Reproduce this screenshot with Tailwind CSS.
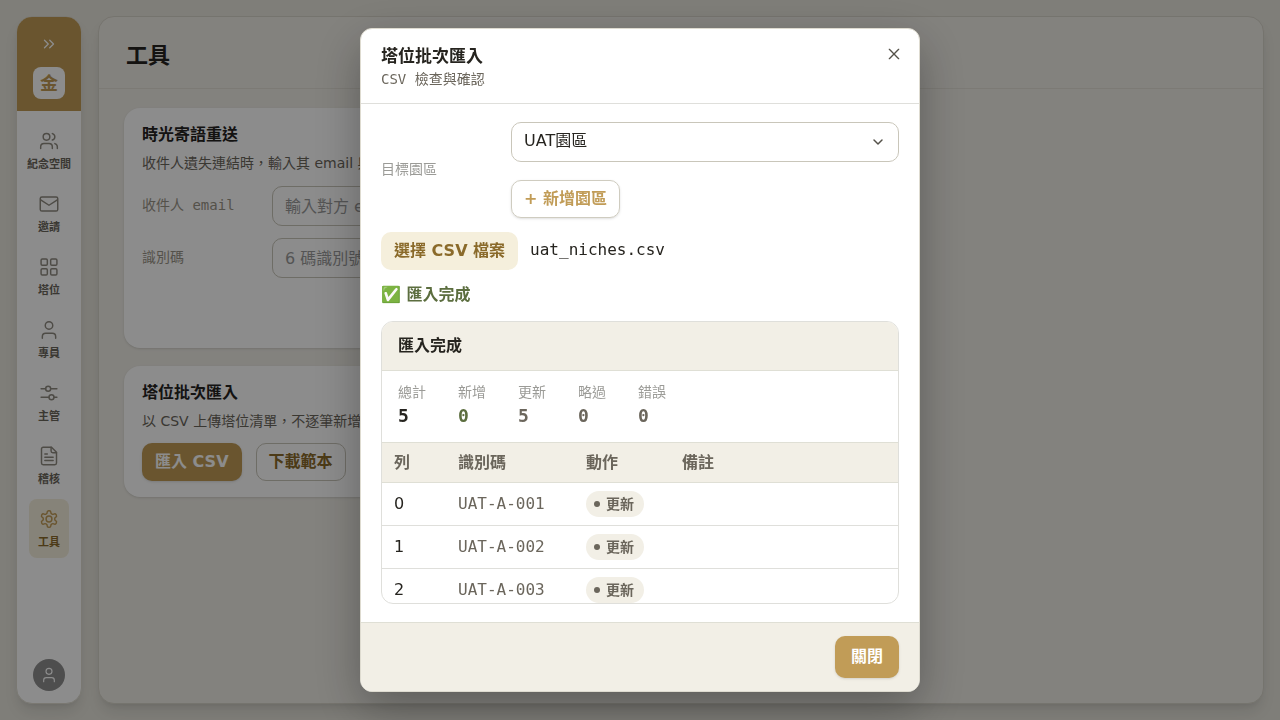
<!DOCTYPE html>
<html lang="zh-Hant">
  <head>
    <meta charset="UTF-8" />
    <meta name="viewport" content="width=device-width, initial-scale=1.0" />
    <title>工具</title>
    <script src="https://cdn.jsdelivr.net/npm/@tailwindcss/browser@4"></script>
    <style>
      body {
        font-family: "DejaVu Sans", "Noto Sans CJK TC", sans-serif;
      }
      .mono {
        font-family: "DejaVu Sans Mono", "Noto Sans CJK TC", monospace;
      }
    </style>
  </head>
  <body class="h-screen overflow-hidden bg-[#e7e5dc] text-base text-[#26241f]">
    <!-- App shell -->
    <div class="flex h-full gap-4 p-4">
      <!-- Sidebar -->
      <aside class="flex w-[66px] shrink-0 flex-col overflow-hidden rounded-2xl border border-[#dedbd0] bg-white shadow-lg">
        <div class="flex flex-col items-center gap-3 bg-[#c19c57] pt-4 pb-3 text-white">
          <button class="flex h-[22px] items-center" aria-label="展開選單">
            <svg width="18" height="18" viewBox="0 0 24 24" fill="none" stroke="currentColor" stroke-width="1.75" stroke-linecap="round" stroke-linejoin="round"><path d="m6 17 5-5-5-5" /><path d="m13 17 5-5-5-5" /></svg>
          </button>
          <div class="flex size-8 items-center justify-center rounded-lg bg-white pt-[2px] text-lg font-bold text-[#c19c57]">金</div>
        </div>
        <nav class="flex flex-1 flex-col items-center gap-1 pt-[10px] text-[11px] font-bold text-[#6b665c]">
          <a href="#" class="flex w-10 flex-col items-center gap-[6px] rounded-lg pt-[10px] pb-[7px]">
            <svg class="text-[#8f8a80]" width="20" height="20" viewBox="0 0 24 24" fill="none" stroke="currentColor" stroke-width="1.75" stroke-linecap="round" stroke-linejoin="round"><path d="M16 21v-2a4 4 0 0 0-4-4H6a4 4 0 0 0-4 4v2" /><circle cx="9" cy="7" r="4" /><path d="M22 21v-2a4 4 0 0 0-3-3.87" /><path d="M16 3.13a4 4 0 0 1 0 7.75" /></svg>
            <span class="leading-4 whitespace-nowrap">紀念空間</span>
          </a>
          <a href="#" class="flex w-10 flex-col items-center gap-[6px] rounded-lg pt-[10px] pb-[7px]">
            <svg class="text-[#8f8a80]" width="20" height="20" viewBox="0 0 24 24" fill="none" stroke="currentColor" stroke-width="1.75" stroke-linecap="round" stroke-linejoin="round"><rect x="1.5" y="3.5" width="21" height="17" rx="2" /><path d="m2 7 10 6.5L22 7" /></svg>
            <span class="leading-4 whitespace-nowrap">邀請</span>
          </a>
          <a href="#" class="flex w-10 flex-col items-center gap-[6px] rounded-lg pt-[10px] pb-[7px]">
            <svg class="text-[#8f8a80]" width="20" height="20" viewBox="0 0 24 24" fill="none" stroke="currentColor" stroke-width="1.75" stroke-linecap="round" stroke-linejoin="round"><rect x="2.5" y="2.5" width="7.5" height="7.5" rx="1.5" /><rect x="14" y="2.5" width="7.5" height="7.5" rx="1.5" /><rect x="2.5" y="14" width="7.5" height="7.5" rx="1.5" /><rect x="14" y="14" width="7.5" height="7.5" rx="1.5" /></svg>
            <span class="leading-4 whitespace-nowrap">塔位</span>
          </a>
          <a href="#" class="flex w-10 flex-col items-center gap-[6px] rounded-lg pt-[10px] pb-[7px]">
            <svg class="text-[#8f8a80]" width="20" height="20" viewBox="0 0 24 24" fill="none" stroke="currentColor" stroke-width="1.75" stroke-linecap="round" stroke-linejoin="round"><path d="M20 22v-2a4 4 0 0 0-4-4H8a4 4 0 0 0-4 4v2" /><circle cx="12" cy="6.5" r="4.5" /></svg>
            <span class="leading-4 whitespace-nowrap">專員</span>
          </a>
          <a href="#" class="flex w-10 flex-col items-center gap-[6px] rounded-lg pt-[10px] pb-[7px]">
            <svg class="text-[#8f8a80]" width="20" height="20" viewBox="0 0 24 24" fill="none" stroke="currentColor" stroke-width="1.75" stroke-linecap="round" stroke-linejoin="round"><path d="M2.5 7H8" /><circle cx="11" cy="7" r="3" /><path d="M14 7h7.5" /><path d="M2.5 17H12" /><circle cx="15" cy="17" r="3" /><path d="M18 17h3.5" /></svg>
            <span class="leading-4 whitespace-nowrap">主管</span>
          </a>
          <a href="#" class="flex w-10 flex-col items-center gap-[6px] rounded-lg pt-[10px] pb-[7px]">
            <svg class="text-[#8f8a80]" width="20" height="20" viewBox="0 0 24 24" fill="none" stroke="currentColor" stroke-width="1.75" stroke-linecap="round" stroke-linejoin="round"><path d="M15 1.5H5a2 2 0 0 0-2 2v17a2 2 0 0 0 2 2h14a2 2 0 0 0 2-2V7.5Z" /><path d="M14.5 1.5V6a2 2 0 0 0 2 2H21" /><path d="M10 9.5H7" /><path d="M17 13.5H7" /><path d="M17 17.5H7" /></svg>
            <span class="leading-4 whitespace-nowrap">稽核</span>
          </a>
          <a href="#" aria-current="page" class="flex w-10 flex-col items-center gap-[6px] rounded-lg bg-[#f5efdc] pt-[10px] pb-[7px] text-[#8a6a2a]">
            <svg class="text-[#c19c57]" width="20" height="20" viewBox="0 0 24 24" fill="none" stroke="currentColor" stroke-width="1.75" stroke-linecap="round" stroke-linejoin="round"><path d="M12.22 2h-.44a2 2 0 0 0-2 2v.18a2 2 0 0 1-1 1.73l-.43.25a2 2 0 0 1-2 0l-.15-.08a2 2 0 0 0-2.73.73l-.22.38a2 2 0 0 0 .73 2.73l.15.1a2 2 0 0 1 1 1.72v.51a2 2 0 0 1-1 1.74l-.15.09a2 2 0 0 0-.73 2.73l.22.38a2 2 0 0 0 2.73.73l.15-.08a2 2 0 0 1 2 0l.43.25a2 2 0 0 1 1 1.73V20a2 2 0 0 0 2 2h.44a2 2 0 0 0 2-2v-.18a2 2 0 0 1 1-1.73l.43-.25a2 2 0 0 1 2 0l.15.08a2 2 0 0 0 2.73-.73l.22-.39a2 2 0 0 0-.73-2.73l-.15-.08a2 2 0 0 1-1-1.74v-.5a2 2 0 0 1 1-1.74l.15-.09a2 2 0 0 0 .73-2.73l-.22-.38a2 2 0 0 0-2.73-.73l-.15.08a2 2 0 0 1-2 0l-.43-.25a2 2 0 0 1-1-1.73V4a2 2 0 0 0-2-2z" /><circle cx="12" cy="12" r="3.5" /></svg>
            <span class="leading-4 whitespace-nowrap">工具</span>
          </a>
        </nav>
        <button class="mx-auto mb-3 flex size-8 items-center justify-center rounded-full bg-[#8f8f8f] text-white" aria-label="帳號">
          <svg width="16" height="16" viewBox="0 0 24 24" fill="none" stroke="currentColor" stroke-width="1.75" stroke-linecap="round" stroke-linejoin="round"><path d="M20 22v-2a4 4 0 0 0-4-4H8a4 4 0 0 0-4 4v2" /><circle cx="12" cy="6.5" r="4.5" /></svg>
        </button>
      </aside>

      <!-- Main panel -->
      <main class="min-w-0 flex-1 rounded-2xl border border-[#d6d3c8] bg-[#efede6] shadow-lg">
        <header class="flex h-[72px] items-center border-b border-[#e2dfd6] px-[27px] pt-[6px]">
          <h1 class="text-[22px] leading-8 font-bold">工具</h1>
        </header>
        <div class="flex max-w-[720px] flex-col gap-[18px] px-[25px] pt-[19px]">
          <section class="rounded-2xl bg-white px-[18px] pt-[17px] pb-[18px] shadow-sm">
            <h2 class="leading-5 font-bold">時光寄語重送</h2>
            <p class="mt-2 text-sm leading-[21px] text-[#6b665c]">收件人遺失連結時，輸入其 email 與</p>
            <form class="mt-3 flex flex-col gap-3">
              <div class="flex items-center">
                <label for="email" class="mono w-[130px] pb-[2px] text-sm text-[#9a9488]">收件人 email</label>
                <input id="email" type="email" placeholder="輸入對方 email" class="h-10 flex-1 rounded-[10px] border border-[#c9c6ba] px-3 placeholder:text-[#9a9a9a]" />
              </div>
              <div class="flex items-center">
                <label for="code" class="mono w-[130px] pb-[2px] text-sm text-[#9a9488]">識別碼</label>
                <input id="code" type="text" placeholder="6 碼識別號" class="h-10 flex-1 rounded-[10px] border border-[#c9c6ba] px-3 placeholder:text-[#9a9a9a]" />
              </div>
              <button type="button" class="h-10 self-end rounded-[10px] bg-[#c19c57] px-3 font-bold text-white">重送</button>
            </form>
          </section>
          <section class="rounded-2xl bg-white px-[18px] pt-[17px] pb-4 shadow-sm">
            <h2 class="leading-5 font-bold">塔位批次匯入</h2>
            <p class="mt-2 text-sm leading-[21px] text-[#6b665c]">以 CSV 上傳塔位清單，不逐筆新增。</p>
            <div class="mt-[11px] flex gap-[14px]">
              <button class="h-[38px] rounded-[10px] bg-[#c19c57] px-[13px] font-bold text-white shadow">匯入 CSV</button>
              <button class="h-[38px] rounded-[10px] border border-[#c9c6ba] px-3 font-bold text-[#8a6a2a]">下載範本</button>
            </div>
          </section>
        </div>
      </main>
    </div>

    <!-- Import dialog -->
    <div class="fixed inset-0 flex items-center justify-center bg-black/45 py-7">
      <div role="dialog" aria-modal="true" aria-labelledby="dialogTitle" class="flex h-full w-[560px] flex-col overflow-hidden rounded-xl border border-[#dedbd0] bg-white shadow-[0_16px_48px_rgba(0,0,0,0.3)]">
        <header class="flex items-start justify-between border-b border-[#dfdfdb] px-5 pt-[17px] pb-[14px]">
          <div>
            <h2 id="dialogTitle" class="text-[17px] leading-5 font-bold">塔位批次匯入</h2>
            <p class="mono mt-[3px] text-sm leading-5 text-[#6b665c]">CSV 檢查與確認</p>
          </div>
          <button class="-mr-[3px] text-[#55524a]" aria-label="關閉視窗">
            <svg width="16" height="16" viewBox="0 0 24 24" fill="none" stroke="currentColor" stroke-width="2" stroke-linecap="round"><path d="M5 5l14 14M19 5 5 19" /></svg>
          </button>
        </header>

        <div class="flex min-h-0 flex-1 flex-col px-5 py-[18px]">
          <div class="flex items-center">
            <label for="park" class="mono w-[130px] pb-[2px] text-sm text-[#9b9b97]">目標園區</label>
            <div class="flex flex-1 flex-col items-start gap-[18px]">
              <div class="relative w-full">
                <select id="park" class="h-10 w-full appearance-none rounded-[10px] border border-[#c9c6ba] bg-white px-3 pb-[2px]">
                  <option>UAT園區</option>
                </select>
                <svg class="pointer-events-none absolute top-3 right-[13px] text-[#55524a]" width="16" height="16" viewBox="0 0 16 16" fill="none" stroke="currentColor" stroke-width="1.5" stroke-linecap="round" stroke-linejoin="round"><path d="m4 6 4 4 4-4" /></svg>
              </div>
              <button class="h-[38px] rounded-[10px] border border-[#cfccc0] px-3 font-bold text-[#c19c57] shadow-sm">+ 新增園區</button>
            </div>
          </div>

          <div class="mt-[14px] flex items-center gap-3">
            <button class="h-[38px] rounded-[10px] bg-[#f5efdc] px-[13px] font-bold text-[#8a6a2a]">選擇 CSV 檔案</button>
            <span class="mono pb-[2px]">uat_niches.csv</span>
          </div>

          <p class="mt-[13px] leading-6 font-bold text-[#5c6e3f]">✅ 匯入完成</p>

          <!-- Result -->
          <section class="mt-[14px] flex min-h-0 flex-1 flex-col overflow-hidden rounded-xl border border-[#dfdfdb]">
            <h3 class="shrink-0 border-b border-[#dfdfd5] bg-[#f2efe6] px-4 py-3 leading-6 font-bold">匯入完成</h3>
            <dl class="flex shrink-0 gap-8 px-4 pt-[11px] pb-[14px]">
              <div>
                <dt class="mono text-sm leading-5 text-[#9b9b97]">總計</dt>
                <dd class="mono mt-[2px] text-lg leading-6 font-bold">5</dd>
              </div>
              <div>
                <dt class="mono text-sm leading-5 text-[#9b9b97]">新增</dt>
                <dd class="mono mt-[2px] text-lg leading-6 font-bold text-[#5c6e3f]">0</dd>
              </div>
              <div>
                <dt class="mono text-sm leading-5 text-[#9b9b97]">更新</dt>
                <dd class="mono mt-[2px] text-lg leading-6 font-bold text-[#6b665c]">5</dd>
              </div>
              <div>
                <dt class="mono text-sm leading-5 text-[#9b9b97]">略過</dt>
                <dd class="mono mt-[2px] text-lg leading-6 font-bold text-[#6b665c]">0</dd>
              </div>
              <div>
                <dt class="mono text-sm leading-5 text-[#9b9b97]">錯誤</dt>
                <dd class="mono mt-[2px] text-lg leading-6 font-bold text-[#6b665c]">0</dd>
              </div>
            </dl>
            <div class="min-h-0 flex-1 overflow-hidden">
              <table class="w-full table-fixed text-left">
                <thead class="bg-[#f2efe6] text-[#6b665c]">
                  <tr class="h-10 border-y border-[#dfdfd5]">
                    <th class="w-16 px-3">列</th>
                    <th class="w-32 px-3">識別碼</th>
                    <th class="w-24 px-3">動作</th>
                    <th class="px-3">備註</th>
                  </tr>
                </thead>
                <tbody>
                  <tr class="h-[43px] border-b border-[#dfdfdb]">
                    <td class="px-3">0</td>
                    <td class="mono px-3 text-[#6b665c]">UAT-A-001</td>
                    <td class="px-3"><span class="flex h-[26px] w-fit items-center gap-[6px] rounded-full bg-[#f2efe6] pr-[10px] pl-2 text-sm font-bold text-[#6b665c]"><i class="size-[6px] rounded-full bg-[#6b665c]"></i>更新</span></td>
                    <td class="px-3"></td>
                  </tr>
                  <tr class="h-[43px] border-b border-[#dfdfdb]">
                    <td class="px-3">1</td>
                    <td class="mono px-3 text-[#6b665c]">UAT-A-002</td>
                    <td class="px-3"><span class="flex h-[26px] w-fit items-center gap-[6px] rounded-full bg-[#f2efe6] pr-[10px] pl-2 text-sm font-bold text-[#6b665c]"><i class="size-[6px] rounded-full bg-[#6b665c]"></i>更新</span></td>
                    <td class="px-3"></td>
                  </tr>
                  <tr class="h-[43px] border-b border-[#dfdfdb]">
                    <td class="px-3">2</td>
                    <td class="mono px-3 text-[#6b665c]">UAT-A-003</td>
                    <td class="px-3"><span class="flex h-[26px] w-fit items-center gap-[6px] rounded-full bg-[#f2efe6] pr-[10px] pl-2 text-sm font-bold text-[#6b665c]"><i class="size-[6px] rounded-full bg-[#6b665c]"></i>更新</span></td>
                    <td class="px-3"></td>
                  </tr>
                </tbody>
              </table>
            </div>
          </section>
        </div>

        <footer class="flex justify-end border-t border-[#dfdfd5] bg-[#f2efe6] px-5 py-[13px]">
          <button class="h-[42px] rounded-[10px] bg-[#c19c57] px-4 font-bold text-white shadow">關閉</button>
        </footer>
      </div>
    </div>
  </body>
</html>
